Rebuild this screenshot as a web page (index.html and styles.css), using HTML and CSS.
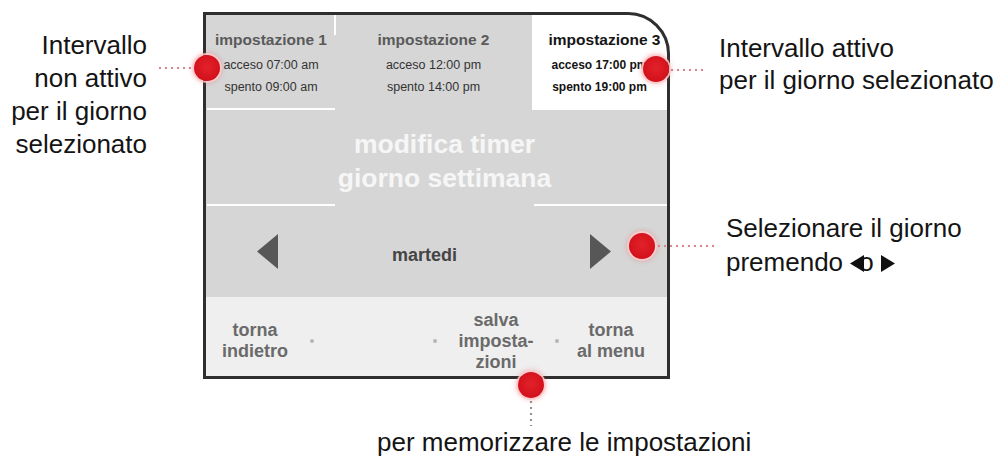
FILE: index.html
```html
<!DOCTYPE html>
<html lang="it">
<head>
<meta charset="utf-8">
<title>modifica timer giorno settimana</title>
<link rel="stylesheet" href="styles.css">
</head>
<body>
<div class="canvas">
  <div class="device">
    <div class="tabs">
      <div class="tab tab-first">
        <div class="tab-title">impostazione 1</div>
        <div class="tab-line">acceso 07:00 am</div>
        <div class="tab-line">spento 09:00 am</div>
      </div>
      <div class="tab">
        <div class="tab-title">impostazione 2</div>
        <div class="tab-line">acceso 12:00 pm</div>
        <div class="tab-line">spento 14:00 pm</div>
      </div>
      <div class="tab tab-active">
        <div class="tab-title">impostazione 3</div>
        <div class="tab-line">acceso 17:00 pm</div>
        <div class="tab-line">spento 19:00 pm</div>
      </div>
    </div>
    <div class="heading">modifica timer<br>giorno settimana</div>
    <div class="nav">
      <svg class="nav-arrow" viewBox="0 0 21 35" width="21" height="35"><polygon points="21,0 21,35 0,17.5" fill="#575757"/></svg>
      <div class="day">martedi</div>
      <svg class="nav-arrow" viewBox="0 0 21 35" width="21" height="35"><polygon points="0,0 0,35 21,17.5" fill="#575757"/></svg>
    </div>
    <div class="footer">
      <div class="btn">torna<br>indietro</div>
      <span class="sep"></span>
      <span></span>
      <span class="sep"></span>
      <div class="btn">salva<br>imposta-<br>zioni</div>
      <span class="sep"></span>
      <div class="btn">torna<br>al menu</div>
    </div>
  </div>

  <p class="note note-left">Intervallo<br>non attivo<br>per il giorno<br>selezionato</p>
  <p class="note note-active">Intervallo attivo<br>per il giorno selezionato</p>
  <p class="note note-day">Selezionare il giorno<br>premendo <svg class="tri tri-l" viewBox="0 0 14 17" width="14" height="17"><polygon points="14,0 14,17 0,8.5" fill="#111"/></svg>o <svg class="tri" viewBox="0 0 14 17" width="14" height="17"><polygon points="0,0 0,17 14,8.5" fill="#111"/></svg></p>
  <p class="note note-save">per memorizzare le impostazioni</p>

  <span class="lead lead-h lead-1"></span>
  <span class="lead lead-h lead-2"></span>
  <span class="lead lead-h lead-3"></span>
  <span class="lead lead-v lead-4"></span>

  <span class="pin pin-1"></span>
  <span class="pin pin-2"></span>
  <span class="pin pin-3"></span>
  <span class="pin pin-4"></span>
</div>
</body>
</html>
```

FILE: styles.css
```css
html, body {
  margin: 0;
  padding: 0;
  background: #ffffff;
}

.canvas {
  position: relative;
  width: 1001px;
  height: 468px;
  box-sizing: border-box;
  padding: 12px 0 0 203px;
  overflow: hidden;
  font-family: "Liberation Sans", Arial, sans-serif;
}

/* ---------- device ---------- */
.device {
  width: 467px;
  height: 367px;
  box-sizing: border-box;
  border: 3px solid #2f2f2f;
  border-top-right-radius: 42px;
  overflow: hidden;
  display: grid;
  grid-template-rows: 95px 96px 91px 79px;
  background: #d6d6d6;
}

.tabs {
  display: grid;
  grid-template-columns: 129px 197px 135px;
}

.tab {
  position: relative;
  box-sizing: border-box;
  padding-top: 15px;
  text-align: center;
  color: #3a3a3a;
}

.tab-first {
  border-bottom: 2px solid #ffffff;
  margin-left: 1px;
}

.tab-first::after {
  content: "";
  position: absolute;
  right: -1px;
  top: 0;
  width: 2px;
  height: 20px;
  background: #ffffff;
}

.tab-title {
  font-weight: bold;
  font-size: 15.5px;
  line-height: 20px;
  color: #5a5a5a;
  margin-bottom: 4px;
}

.tab-line {
  font-size: 12.5px;
  line-height: 22px;
  color: #333333;
}

.tab-active {
  background: #ffffff;
  border-top-right-radius: 39px;
  color: #111111;
}

.tab-active .tab-title {
  color: #161616;
  padding-left: 10px;
}

.tab-active .tab-line {
  font-weight: bold;
  font-size: 12px;
  color: #141414;
}

.heading {
  box-sizing: border-box;
  padding: 17px 0 0 16px;
  text-align: center;
  font-weight: bold;
  font-size: 26.5px;
  line-height: 34px;
  color: #f6f6f6;
  background:
    linear-gradient(#ffffff, #ffffff) left 1px bottom 0 / 128px 2px no-repeat,
    linear-gradient(#ffffff, #ffffff) right 0 bottom 0 / 133px 2px no-repeat,
    #d6d6d6;
}

.nav {
  display: flex;
  align-items: center;
  padding: 0 56px 0 51px;
}

.nav-arrow {
  flex: none;
  display: block;
}

.day {
  flex: 1;
  text-align: center;
  margin-right: 19px;
  padding-top: 8px;
  font-weight: bold;
  font-size: 18px;
  color: #454545;
}

.footer {
  display: grid;
  grid-template-columns: 98px 16px 107px 16px 106px 16px 92px;
  align-items: center;
  box-sizing: border-box;
  padding-top: 9px;
  background: #efefef;
}

.btn {
  text-align: center;
  font-weight: bold;
  font-size: 18px;
  line-height: 21px;
  color: #6a6a6a;
}

.sep {
  justify-self: center;
  width: 4px;
  height: 4px;
  border-radius: 50%;
  background: #b5b5b5;
}

/* ---------- annotations ---------- */
.note {
  position: absolute;
  margin: 0;
  font-family: "Liberation Sans", Arial, sans-serif;
  font-size: 26px;
  color: #141414;
  white-space: nowrap;
}

.note-left {
  right: 854px;
  top: 29px;
  line-height: 33px;
  text-align: right;
}

.note-active {
  left: 719px;
  top: 32px;
  line-height: 32px;
}

.note-day {
  left: 726px;
  top: 211px;
  line-height: 34px;
}

.note-save {
  left: 377px;
  top: 426px;
  line-height: 33px;
}

.tri {
  display: inline-block;
  vertical-align: -1px;
}

.tri-l {
  margin-right: -5px;
  position: relative;
}

.lead {
  position: absolute;
  background-repeat: repeat;
}

.lead-h {
  height: 4px;
  background-image: radial-gradient(circle, #d98594 1.1px, transparent 1.6px);
  background-size: 6px 4px;
}

.lead-v {
  width: 4px;
  background-image: radial-gradient(circle, #9a8f93 1.1px, transparent 1.6px);
  background-size: 4px 6px;
}

.lead-1 { left: 157px; top: 66px; width: 38px; }
.lead-2 { left: 669px; top: 68px; width: 38px; }
.lead-3 { left: 656px; top: 244px; width: 58px; }
.lead-4 { left: 529px; top: 399px; height: 27px; }

.pin {
  position: absolute;
  width: 26px;
  height: 26px;
  margin: -13px 0 0 -13px;
  border-radius: 50%;
  background: radial-gradient(circle at 50% 45%, #e2222b 0%, #d3111c 70%, #c60d18 100%);
  box-shadow: 0 0 0 2px rgba(255, 205, 205, 0.85), 0 0 5px 2px rgba(230, 80, 90, 0.35);
}

.pin-1 { left: 207px; top: 68px; }
.pin-2 { left: 656px; top: 69px; }
.pin-3 { left: 642px; top: 246px; }
.pin-4 { left: 531px; top: 385px; }
```
